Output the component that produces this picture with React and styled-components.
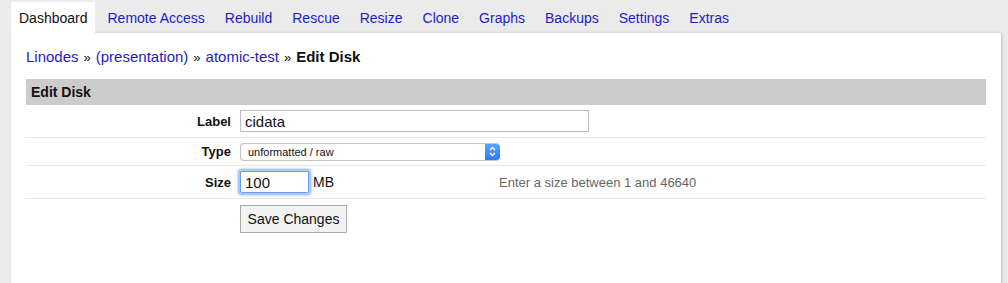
import React, { useState } from "react";
import styled, { createGlobalStyle } from "styled-components";

const Global = createGlobalStyle`
  html, body {
    margin: 0;
    background: #ebebeb;
    font-family: "Liberation Sans", Arial, Helvetica, sans-serif;
    color: #111;
  }
`;

const Page = styled.div`
  width: 1008px;
  height: 283px;
  overflow: hidden;
`;

const Tabs = styled.nav`
  display: flex;
  gap: 5px;
  padding: 2px 0 0 11px;
  height: 31px;
`;

const Tab = styled.a`
  display: flex;
  align-items: center;
  padding: 0 7px 0 8px;
  font-size: 14px;
  color: ${(p) => (p.$active ? "#111" : "#1d1dc4")};
  background: ${(p) => (p.$active ? "#fff" : "transparent")};
  text-decoration: none;
  cursor: pointer;
`;

const Panel = styled.div`
  margin-left: 11px;
  width: 960px;
  min-height: 260px;
  padding: 15px 15px;
  background: #fff;
  box-shadow: 1px 0 3px rgba(0, 0, 0, 0.18);
`;

const Crumbs = styled.div`
  display: flex;
  align-items: baseline;
  height: 18px;
  font-size: 15px;
  line-height: 18px;
  margin-bottom: 13px;
  color: #111;
`;

const Crumb = styled.a`
  color: #1d1dc4;
  text-decoration: none;
`;

const Sep = styled.span`
  font-size: 13px;
  margin: 0 5px;
`;

const Current = styled.b`
  font-weight: bold;
`;

const SectionHead = styled.div`
  height: 26px;
  line-height: 26px;
  padding-left: 5px;
  background: #cccccc;
  font-size: 14px;
  font-weight: bold;
`;

const Row = styled.div`
  display: grid;
  grid-template-columns: 214px 1fr;
  align-items: center;
  height: ${(p) => p.$h}px;
  border-bottom: 1px solid #e6e6e6;
`;

const Label = styled.label`
  text-align: right;
  padding-right: 9px;
  font-size: 13px;
  font-weight: bold;
`;

const Field = styled.div`
  display: flex;
  align-items: center;
`;

const TextInput = styled.input`
  box-sizing: border-box;
  width: ${(p) => p.$w}px;
  height: 22px;
  padding: 0 4px;
  font: 15px "Liberation Sans", Arial, sans-serif;
  color: #111;
  border: 1px solid ${(p) => (p.$focus ? "#6d9de6" : "#bdbdbd")};
  box-shadow: ${(p) => (p.$focus ? "0 0 0 2px #a9c8f5, 0 0 3px 2px #8fb6ee" : "none")};
  outline: none;
  border-radius: ${(p) => (p.$focus ? "2px" : "0")};
`;

const SelectBox = styled.div`
  display: flex;
  width: 260px;
  height: 18px;
  box-sizing: border-box;
  border: 1px solid #c4c4c4;
  border-right: none;
  border-radius: 4px;
  overflow: hidden;
  background: #fff;
`;

const SelectText = styled.select`
  flex: 1;
  appearance: none;
  -webkit-appearance: none;
  border: none;
  outline: none;
  background: transparent;
  padding: 0 0 0 7px;
  font: 11px "Liberation Sans", Arial, sans-serif;
  color: #111;
`;

const Stepper = styled.span`
  width: 15px;
  display: flex;
  align-items: center;
  justify-content: center;
  background: linear-gradient(#5aa2ff, #2a7cf2);
`;

const Unit = styled.span`
  margin-left: 4px;
  font-size: 14px;
  width: 186px;
`;

const Help = styled.span`
  font-size: 13px;
  color: #666;
`;

const ButtonRow = styled.div`
  display: grid;
  grid-template-columns: 214px 1fr;
  padding-top: 6px;
`;

const Button = styled.button`
  grid-column: 2;
  justify-self: start;
  width: 107px;
  height: 28px;
  background: #f2f2f2;
  border: 1px solid #ababab;
  font: 14px "Liberation Sans", Arial, sans-serif;
  color: #111;
  padding: 0;
  cursor: pointer;
`;

const tabs = [
  "Dashboard",
  "Remote Access",
  "Rebuild",
  "Rescue",
  "Resize",
  "Clone",
  "Graphs",
  "Backups",
  "Settings",
  "Extras",
];

export default function App() {
  const [label, setLabel] = useState("cidata");
  const [size, setSize] = useState("100");

  return (
    <Page>
      <Global />
      <Tabs>
        {tabs.map((t, i) => (
          <Tab key={t} $active={i === 0}>
            {t}
          </Tab>
        ))}
      </Tabs>
      <Panel>
        <Crumbs>
          <Crumb>Linodes</Crumb>
          <Sep>»</Sep>
          <Crumb>(presentation)</Crumb>
          <Sep>»</Sep>
          <Crumb>atomic-test</Crumb>
          <Sep>»</Sep>
          <Current>Edit Disk</Current>
        </Crumbs>
        <SectionHead>Edit Disk</SectionHead>
        <Row $h={32}>
          <Label>Label</Label>
          <Field>
            <TextInput $w={349} value={label} onChange={(e) => setLabel(e.target.value)} />
          </Field>
        </Row>
        <Row $h={27}>
          <Label>Type</Label>
          <Field>
            <SelectBox>
              <SelectText defaultValue="raw">
                <option value="raw">unformatted / raw</option>
                <option value="ext4">ext4</option>
                <option value="swap">swap</option>
              </SelectText>
              <Stepper>
                <svg width="7" height="11" viewBox="0 0 7 11">
                  <path d="M1 4 L3.5 1.5 L6 4 M1 7 L3.5 9.5 L6 7" fill="none" stroke="#fff" strokeWidth="1.3" />
                </svg>
              </Stepper>
            </SelectBox>
          </Field>
        </Row>
        <Row $h={32}>
          <Label>Size</Label>
          <Field>
            <TextInput $w={69} $focus value={size} onChange={(e) => setSize(e.target.value)} />
            <Unit>MB</Unit>
            <Help>Enter a size between 1 and 46640</Help>
          </Field>
        </Row>
        <ButtonRow>
          <Button>Save Changes</Button>
        </ButtonRow>
      </Panel>
    </Page>
  );
}
